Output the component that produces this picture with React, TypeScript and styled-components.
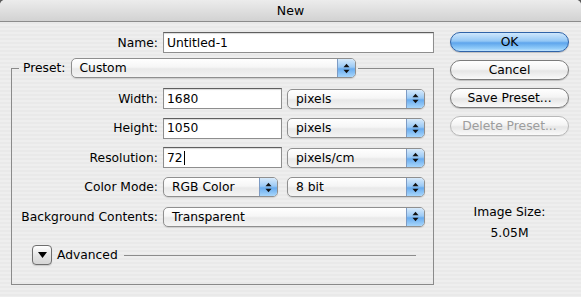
import React from "react";
import styled, { createGlobalStyle } from "styled-components";

const GlobalStyle = createGlobalStyle`
  html, body {
    margin: 0;
    padding: 0;
    background: #5a5a5a;
  }
  body {
    font-family: "DejaVu Sans", "Liberation Sans", sans-serif;
    font-size: 12.3px;
    color: #000;
  }
`;

const Window = styled.div`
  width: 581px;
  height: 297px;
  overflow: hidden;
  border-radius: 5px 5px 0 0;
  background: repeating-linear-gradient(
    to bottom,
    #eeeeee 0px,
    #eeeeee 2px,
    #e9e9e9 2px,
    #e9e9e9 4px
  );
`;

const TitleBar = styled.div`
  height: 21px;
  border-bottom: 1px solid #8c8c8c;
  background: linear-gradient(to bottom, #ececec, #d2d2d2);
  display: flex;
  align-items: center;
  justify-content: center;
  font-size: 12.5px;
`;

const Body = styled.div`
  display: flex;
  padding: 10px 0 0 11px;
`;

const LeftColumn = styled.div`
  width: 423px;
  display: flex;
  flex-direction: column;
`;

const RightColumn = styled.div`
  width: 119px;
  margin-left: 16px;
  display: flex;
  flex-direction: column;
  gap: 8px;
`;

const NameRow = styled.div`
  display: grid;
  grid-template-columns: 147px 271px;
  column-gap: 5px;
  align-items: center;
`;

const Label = styled.div`
  text-align: right;
  white-space: nowrap;
`;

const Field = styled.div`
  height: 21px;
  box-sizing: border-box;
  background: #fff;
  border: 1px solid #8e8e8e;
  border-top-color: #5f5f5f;
  box-shadow: inset 0 1px 1px rgba(0, 0, 0, 0.15);
  padding: 0 3px;
  display: flex;
  align-items: center;
  white-space: nowrap;
`;

const Caret = styled.span`
  display: inline-block;
  width: 1px;
  height: 14px;
  background: #000;
  margin-left: 1px;
`;

const Group = styled.fieldset`
  margin: 5px 0 0 0;
  padding: 10px 0 19px 0;
  border: 1px solid #8a8a8a;
  min-width: 0;
`;

const Legend = styled.legend`
  margin-left: 7px;
  padding: 0 2px 0 4px;
`;

const LegendInner = styled.div`
  display: flex;
  align-items: center;
  gap: 5px;
`;

const FormGrid = styled.div`
  display: grid;
  grid-template-columns: 146px 119px 138px;
  grid-auto-rows: 21px;
  column-gap: 5px;
  row-gap: 8.5px;
  align-items: center;
`;

const Popup = styled.div<{ $width?: number; $span?: boolean }>`
  height: 20px;
  box-sizing: border-box;
  width: ${(p) => (p.$width ? `${p.$width}px` : "auto")};
  grid-column: ${(p) => (p.$span ? "2 / 4" : "auto")};
  display: flex;
  border: 1px solid #8f8f8f;
  border-radius: 5px;
  overflow: hidden;
  background: linear-gradient(
    to bottom,
    #ffffff 0%,
    #f6f6f6 45%,
    #e9e9e9 55%,
    #f4f4f4 100%
  );
  box-shadow: 0 1px 1px rgba(0, 0, 0, 0.12);
`;

const PopupText = styled.div`
  flex: 1;
  padding-left: 8px;
  display: flex;
  align-items: center;
  white-space: nowrap;
`;

const PopupArrows = styled.div`
  width: 17px;
  border-left: 1px solid #7d9bc4;
  display: flex;
  align-items: center;
  justify-content: center;
  background: linear-gradient(
    to bottom,
    #d7eafb 0%,
    #9ccaf5 45%,
    #69acef 55%,
    #a8d6fb 100%
  );
`;

const AdvancedRow = styled.div`
  display: flex;
  align-items: center;
  margin: 18px 17px 0 20px;
  height: 20px;
`;

const Disclosure = styled.div`
  width: 20px;
  height: 20px;
  box-sizing: border-box;
  border: 1px solid #6e6e6e;
  border-radius: 4px;
  background: linear-gradient(to bottom, #ffffff, #e4e4e4 55%, #d6d6d6);
  display: flex;
  align-items: center;
  justify-content: center;
  box-shadow: 0 1px 1px rgba(0, 0, 0, 0.15);
`;

const AdvancedLabel = styled.div`
  margin-left: 5px;
  white-space: nowrap;
`;

const Rule = styled.div`
  flex: 1;
  height: 1px;
  margin-left: 6px;
  background: #8c8c8c;
`;

const PillButton = styled.div<{ $primary?: boolean; $disabled?: boolean }>`
  height: 20px;
  box-sizing: border-box;
  border-radius: 10px;
  display: flex;
  align-items: center;
  justify-content: center;
  border: 1px solid
    ${(p) => (p.$primary ? "#2f63a8" : p.$disabled ? "#b9b9b9" : "#7c7c7c")};
  color: ${(p) => (p.$disabled ? "#9d9d9d" : "#000")};
  background: ${(p) =>
    p.$primary
      ? "linear-gradient(to bottom, #cfe7fc 0%, #93c7f5 45%, #5ea5ec 55%, #8fcbf9 85%, #bfe3fd 100%)"
      : "linear-gradient(to bottom, #ffffff 0%, #f4f4f4 45%, #e6e6e6 55%, #fafafa 100%)"};
  box-shadow: 0 1px 1px rgba(0, 0, 0, ${(p) => (p.$disabled ? 0.06 : 0.2)});
`;

const SizeInfo = styled.div`
  margin-top: 60px;
  display: flex;
  flex-direction: column;
  align-items: center;
  gap: 5px;
  line-height: 16px;
`;

const Arrows = () => (
  <svg width="7" height="11" viewBox="0 0 7 11">
    <polygon points="0.5,4.2 3.5,0.8 6.5,4.2" fill="#111" />
    <polygon points="0.5,6.8 3.5,10.2 6.5,6.8" fill="#111" />
  </svg>
);

const Select = ({
  value,
  width,
  span,
}: {
  value: string;
  width?: number;
  span?: boolean;
}) => (
  <Popup $width={width} $span={span}>
    <PopupText>{value}</PopupText>
    <PopupArrows>
      <Arrows />
    </PopupArrows>
  </Popup>
);

export default function App() {
  return (
    <Window>
      <GlobalStyle />
      <TitleBar>New</TitleBar>
      <Body>
        <LeftColumn>
          <NameRow>
            <Label>Name:</Label>
            <Field>Untitled-1</Field>
          </NameRow>
          <Group>
            <Legend>
              <LegendInner>
                <span>Preset:</span>
                <Select value="Custom" width={285} />
              </LegendInner>
            </Legend>
            <FormGrid>
              <Label>Width:</Label>
              <Field>1680</Field>
              <Select value="pixels" />

              <Label>Height:</Label>
              <Field>1050</Field>
              <Select value="pixels" />

              <Label>Resolution:</Label>
              <Field>
                72
                <Caret />
              </Field>
              <Select value="pixels/cm" />

              <Label>Color Mode:</Label>
              <Select value="RGB Color" width={115} />
              <Select value="8 bit" />

              <Label>Background Contents:</Label>
              <Select value="Transparent" span />
            </FormGrid>
            <AdvancedRow>
              <Disclosure>
                <svg width="9" height="6" viewBox="0 0 9 6">
                  <polygon points="0,0 9,0 4.5,6" fill="#000" />
                </svg>
              </Disclosure>
              <AdvancedLabel>Advanced</AdvancedLabel>
              <Rule />
            </AdvancedRow>
          </Group>
        </LeftColumn>
        <RightColumn>
          <PillButton $primary>OK</PillButton>
          <PillButton>Cancel</PillButton>
          <PillButton>Save Preset...</PillButton>
          <PillButton $disabled>Delete Preset...</PillButton>
          <SizeInfo>
            <div>Image Size:</div>
            <div>5.05M</div>
          </SizeInfo>
        </RightColumn>
      </Body>
    </Window>
  );
}
